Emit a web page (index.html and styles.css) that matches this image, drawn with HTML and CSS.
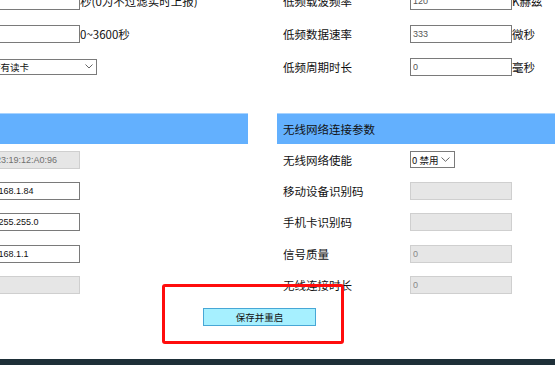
FILE: index.html
```html
<!DOCTYPE html>
<html lang="zh-CN">
<head>
<meta charset="utf-8">
<title>参数设置</title>
<link rel="stylesheet" href="styles.css">
</head>
<body>
<div class="page">
  <div class="cols">
    <section class="col">
      <div class="rows rows-top">
        <div class="row"><span class="lbl">上报过滤时间</span><input class="inp" value=""><span class="unit">秒(0为不过滤实时上报)</span></div>
        <div class="row"><span class="lbl">心跳间隔</span><input class="inp" value=""><span class="unit">0~3600秒</span></div>
        <div class="row"><span class="lbl">读卡模式</span>
          <div class="sel sel-wide"><span class="sel-text">所有读卡</span><svg class="chev" width="8" height="5" viewBox="0 0 8 5"><polyline points="0.5,0.5 4,4 7.5,0.5" fill="none" stroke="#666" stroke-width="1"/></svg></div>
        </div>
      </div>
      <div class="head">有线网络连接参数</div>
      <div class="rows">
        <div class="row"><span class="lbl">MAC地址</span><input class="inp dis" value="AC:23:19:12:A0:96" disabled></div>
        <div class="row"><span class="lbl">IP地址</span><input class="inp" value="192.168.1.84"></div>
        <div class="row"><span class="lbl">子网掩码</span><input class="inp" value="255.255.255.0"></div>
        <div class="row"><span class="lbl">默认网关</span><input class="inp" value="192.168.1.1"></div>
        <div class="row"><span class="lbl">DNS服务器</span><input class="inp dis" value="" disabled></div>
      </div>
    </section>
    <section class="col">
      <div class="rows rows-top">
        <div class="row"><span class="lbl">低频载波频率</span><input class="inp small" value="120"><span class="unit">K赫兹</span></div>
        <div class="row"><span class="lbl">低频数据速率</span><input class="inp small" value="333"><span class="unit">微秒</span></div>
        <div class="row"><span class="lbl">低频周期时长</span><input class="inp small" value="0"><span class="unit">毫秒</span></div>
      </div>
      <div class="head">无线网络连接参数</div>
      <div class="rows">
        <div class="row"><span class="lbl">无线网络使能</span>
          <div class="sel sel-narrow"><span class="sel-text">0&nbsp;禁用</span><svg class="chev" width="9" height="5" viewBox="0 0 9 5"><polyline points="0.5,0.5 4.5,4.3 8.5,0.5" fill="none" stroke="#666" stroke-width="1"/></svg></div>
        </div>
        <div class="row"><span class="lbl">移动设备识别码</span><input class="inp dis" value="" disabled></div>
        <div class="row"><span class="lbl">手机卡识别码</span><input class="inp dis" value="" disabled></div>
        <div class="row"><span class="lbl">信号质量</span><input class="inp dis small" value="0" disabled></div>
        <div class="row"><span class="lbl">无线连接时长</span><input class="inp dis small" value="0" disabled></div>
      </div>
    </section>
  </div>
  <div class="actions"><button class="btn" type="button">保存并重启</button></div>
</div>
<div class="annot"></div>
<footer class="footer"></footer>
</body>
</html>
```

FILE: styles.css
```css
html, body {
  margin: 0;
  padding: 0;
  height: 100%;
  overflow: hidden;
  background: #fff;
}
body {
  font-family: "Noto Sans CJK SC", "Noto Sans", sans-serif;
  font-size: 11.5px;
  color: #111;
}
.page {
  margin-top: -16px;
  margin-left: -155px;
  width: 835px;
}
.cols {
  display: grid;
  grid-template-columns: 403px 403px;
  column-gap: 29px;
}
.row {
  display: flex;
  align-items: center;
  height: 31.3px;
  white-space: nowrap;
}
.rows-top .row {
  height: 33px;
}
.rows-top {
  margin-bottom: 30px;
}
.lbl {
  flex: none;
  width: 127px;
  padding-left: 6px;
}
.inp {
  box-sizing: border-box;
  flex: none;
  width: 102px;
  height: 18px;
  margin: 0;
  padding: 0 2px;
  border: 1px solid #7a7a7a;
  border-radius: 0;
  background: #fff;
  color: #111;
  font-family: "Liberation Sans", sans-serif;
  font-size: 9px;
  outline: none;
}
.inp.small {
  font-size: 9px;
  color: #555;
}
.inp.dis {
  background: #e6e6e6;
  border-color: #cfcfcf;
  color: #707070;
}
.inp.dis.small {
  color: #888;
}
.unit {
  color: #111;
}
.sel {
  box-sizing: border-box;
  flex: none;
  display: flex;
  align-items: center;
  justify-content: space-between;
  border: 1px solid #7a7a7a;
  background: #fff;
  font-size: 9.5px;
  color: #111;
}
.sel-wide {
  width: 119px;
  height: 16px;
  padding: 0 3px 0 12px;
}
.sel-narrow {
  width: 45px;
  height: 17px;
  padding: 0 4px 0 1px;
}
.chev {
  display: block;
  flex: none;
}
.head {
  box-sizing: border-box;
  height: 31px;
  display: flex;
  align-items: center;
  padding-left: 6px;
  background: #63b0fe;
  border-top: 1px solid #a8d3ff;
  color: #111;
  white-space: nowrap;
}
.actions {
  box-sizing: border-box;
  height: 58.5px;
  padding-top: 7.5px;
  display: flex;
  justify-content: center;
}
.btn {
  box-sizing: border-box;
  width: 113px;
  height: 18px;
  margin: 0 6px 0 0;
  padding: 0;
  background: #a6f0ff;
  border: 1px solid #47a7d6;
  border-radius: 0;
  font-family: "Noto Sans CJK SC", sans-serif;
  font-size: 9.5px;
  color: #111;
  line-height: 16px;
}
.annot {
  position: absolute;
  left: 162px;
  top: 284px;
  width: 182px;
  height: 60px;
  box-sizing: border-box;
  border: 3px solid #ff0d0d;
  border-radius: 3px;
  pointer-events: none;
}
.footer {
  height: 30px;
  background: #1e2f38;
}
```
